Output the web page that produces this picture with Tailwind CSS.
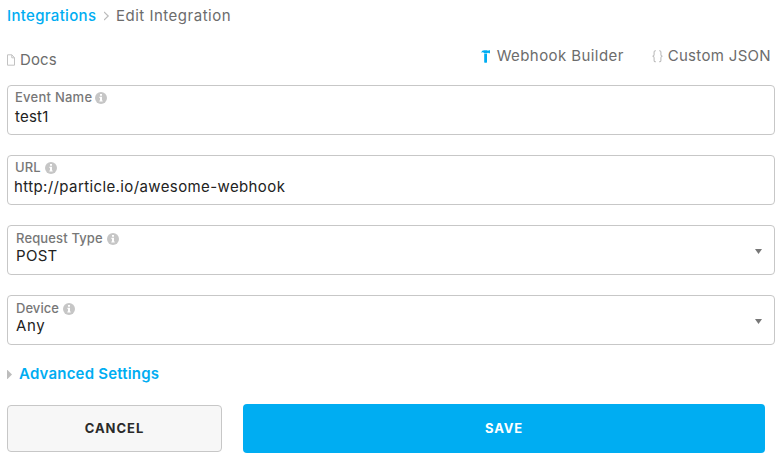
<!DOCTYPE html>
<html lang="en">
<head>
<meta charset="utf-8">
<title>Edit Integration</title>
<script src="https://cdn.jsdelivr.net/npm/@tailwindcss/browser@4"></script>
</head>
<body class="h-[463px] overflow-hidden bg-white font-['Inter',sans-serif] text-[15px] leading-5 whitespace-nowrap text-[#6c6c6c]">
<svg class="hidden">
  <symbol id="info" viewBox="0 0 12 12"><circle cx="6" cy="6" r="6" fill="#c6c6c6"/><path d="M5 2h2v1.7H5zM4.4 4.7H7v3.7h.7v1.2H4.3V8.400H5V5.900h-.6z" fill="#fff"/></symbol>
</svg>
<main class="flex w-[775px] flex-col pt-1.5 pl-[7px]">
  <nav class="flex h-5 items-center">
    <a class="w-[97px] font-medium tracking-[0.32px] text-[#00adf2]">Integrations</a>
    <svg class="w-3" height="10" viewBox="0 0 12 10" fill="none" stroke="#bbb" stroke-width="1.2"><path d="M0 1l4.200 4L0 9"/></svg>
    <span class="tracking-[0.5px]">Edit Integration</span>
  </nav>

  <div class="mt-5 flex h-[39px] justify-between">
    <a class="flex h-5 mt-1 tracking-[0.15px]">
      <svg class="mt-1 mr-[5px]" width="8" height="12" viewBox="0 0 8 12" fill="none" stroke="#c2c2c2" stroke-width="1"><path d="M.5 .8h4.300L7.500 3.700v7.500H.5zM4.800 .8v3h2.700"/></svg>Docs
    </a>
    <div class="flex h-5 pr-1">
      <a class="flex w-[171px] tracking-[0.42px]">
        <svg class="mt-1 mr-[7px]" width="9" height="13" viewBox="0 0 9 13" fill="#00adf2"><path d="M.2 2.700C.6 1 1.700.2 3.300.2H6.200l.5.5h.6l.5-.5H9v3H7.800l-.5-.5h-.6l-.5.500H3.200L2.500 2.500C1.700 1.900.9 2.100.2 2.700zM3.200 3.700h2.800v8.500l-.4.500H3.600l-.4-.5z"/></svg>Webhook Builder
      </a>
      <a class="flex tracking-[0.32px]">
        <svg class="mt-1 mr-[5px]" width="11" height="13" viewBox="0 0 11 13" fill="none" stroke="#bdbdbd" stroke-width="1.100"><path d="M3.900.8H3.400C2.500.8 2.100 1.200 2.100 2.100v2.700c0 .9-.5 1.300-1.500 1.500 1 .2 1.500.6 1.500 1.500v2.700c0 .9.400 1.300 1.300 1.300h.5M7.100.8h.5c.9 0 1.300.4 1.300 1.300v2.700c0 .9.5 1.300 1.500 1.500-1 .2-1.500.6-1.500 1.500v2.700c0 .9-.4 1.300-1.300 1.300h-.5"/></svg>Custom JSON
      </a>
    </div>
  </div>

  <form class="flex flex-col gap-5">
    <label class="flex h-[50px] flex-col gap-0.5 rounded border border-[#c7c7c7] pt-[3px] pl-[7px]">
      <span class="flex h-4 items-center gap-[3px] text-[13px] leading-4 font-medium tracking-[0.25px] text-[#777]">Event Name <svg class="mt-0.5" width="12" height="12"><use href="#info"/></svg></span>
      <span class="tracking-[0.2px] text-[#222]">test1</span>
    </label>
    <label class="flex h-[50px] flex-col gap-0.5 rounded border border-[#c7c7c7] pt-[3px] pl-[7px]">
      <span class="flex h-4 items-center gap-1 text-[13px] leading-4 font-medium tracking-[0.1px] text-[#777]">URL <svg class="mt-0.5" width="12" height="12"><use href="#info"/></svg></span>
      <span class="-ml-px tracking-[0.39px] text-[#222]">http://particle.io/awesome-webhook</span>
    </label>
    <label class="flex h-[50px] items-center justify-between rounded border border-[#c7c7c7] pr-3 pl-2">
      <span class="flex flex-col pb-1">
        <span class="flex h-4 items-center gap-1 text-[13px] leading-4 font-medium tracking-[0.14px] text-[#777]">Request Type <svg class="mt-px" width="12" height="12"><use href="#info"/></svg></span>
        <span class="tracking-[0.3px] text-[#222]">POST</span>
      </span>
      <svg class="mt-[3px]" width="7" height="5" viewBox="0 0 7 5" fill="#777"><path d="M0 0h7L3.500 5z"/></svg>
    </label>
    <label class="flex h-[50px] items-center justify-between rounded border border-[#c7c7c7] pr-3 pl-2">
      <span class="flex flex-col pb-1">
        <span class="flex h-4 items-center gap-1 text-[13px] leading-4 font-medium tracking-[0.05px] text-[#777]">Device <svg class="mt-px" width="12" height="12"><use href="#info"/></svg></span>
        <span class="tracking-[0.6px] text-[#222]">Any</span>
      </span>
      <svg class="mt-[3px]" width="7" height="5" viewBox="0 0 7 5" fill="#777"><path d="M0 0h7L3.500 5z"/></svg>
    </label>
  </form>

  <a class="mt-[19px] flex h-5 items-center gap-[7px] font-semibold tracking-[0.2px] text-[#00adf2]">
    <svg width="5" height="9" viewBox="0 0 5 9" fill="#bdbdbd"><path d="M0 0h.5L5 4.500.5 9H0z"/></svg>Advanced Settings
  </a>

  <div class="mt-5 flex items-center gap-[21px] text-[13px] font-bold">
    <button class="h-[47px] w-[215px] rounded border border-[#c7c7c7] bg-[#f7f7f7] pb-0.5 tracking-[1px] text-[#2a2a2a]">CANCEL</button>
    <button class="h-[49px] w-[522px] rounded bg-[#00adf2] pb-0.5 tracking-[0.8px] text-white">SAVE</button>
  </div>
</main>
</body>
</html>
